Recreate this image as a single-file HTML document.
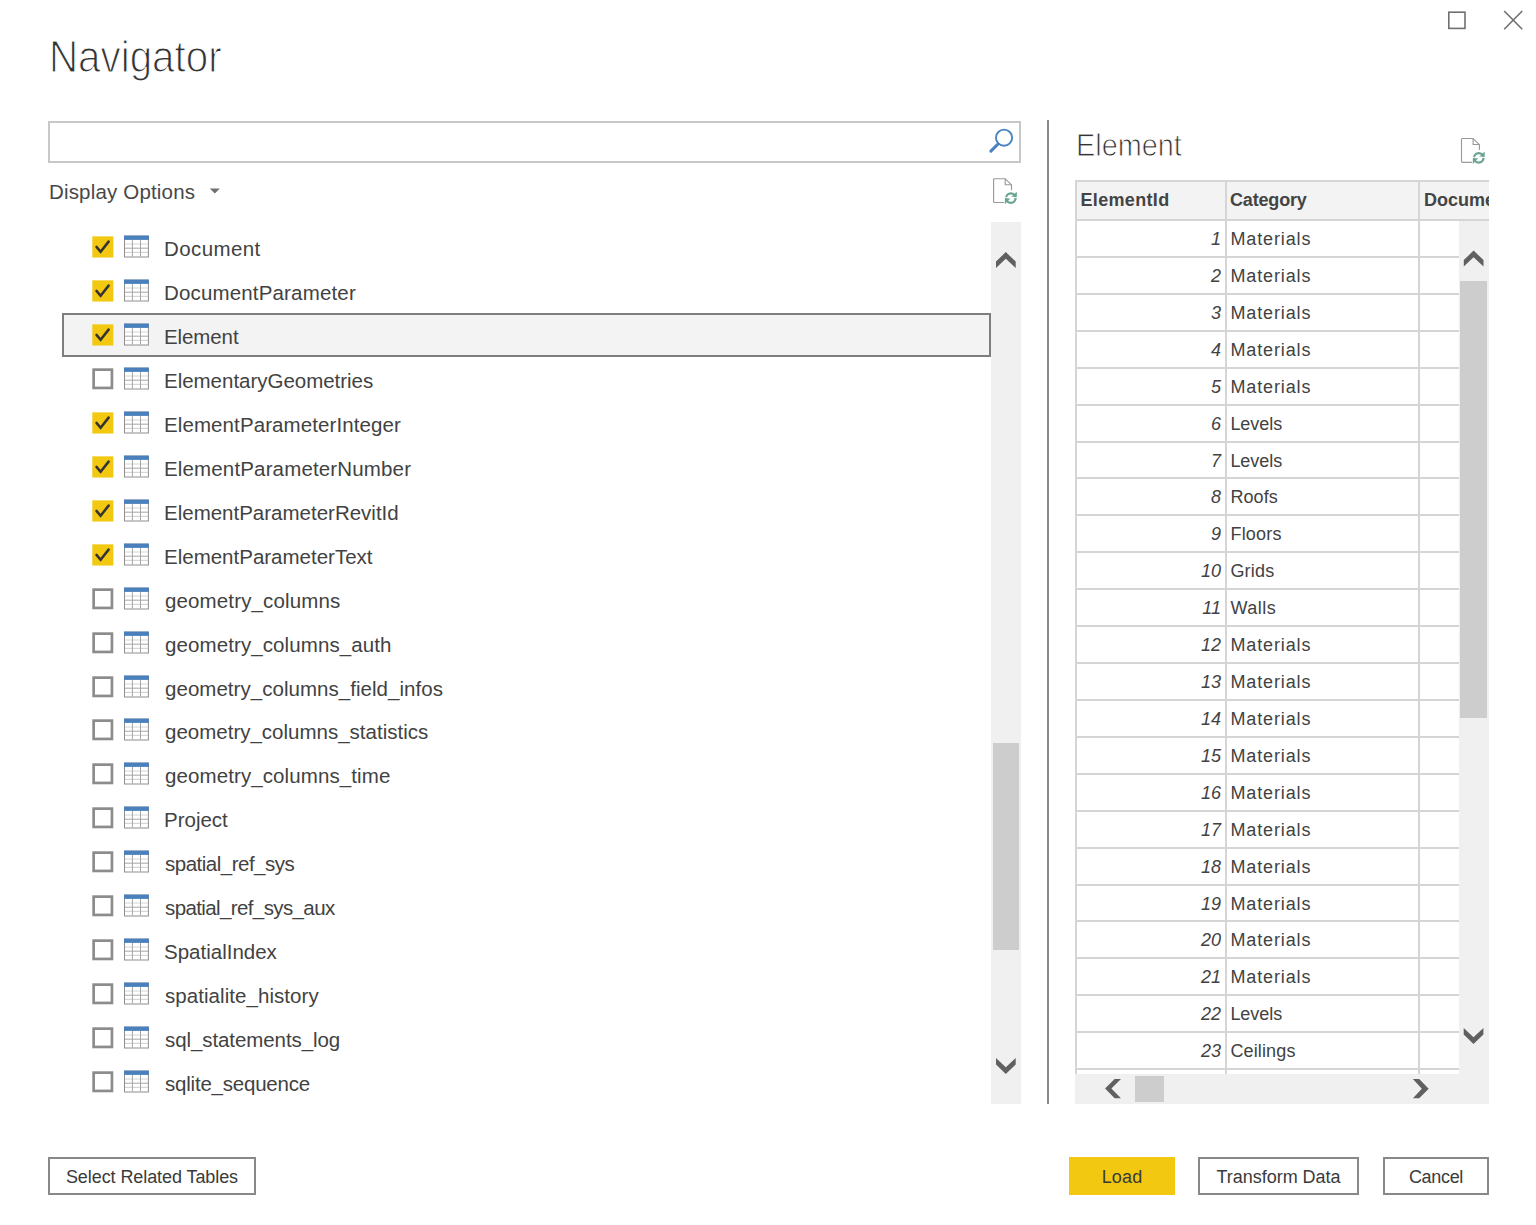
<!DOCTYPE html><html><head><meta charset="utf-8"><title>Navigator</title><style>
html,body{margin:0;padding:0;background:#fff;}
body{width:1536px;height:1225px;position:relative;overflow:hidden;font-family:"Liberation Sans",sans-serif;color:#3a3a3a;}
.abs{position:absolute;}
.overlay{position:absolute;left:0;top:0;pointer-events:none;}
.title{position:absolute;left:48.5px;top:33.5px;font-size:43.6px;line-height:46px;color:#333;-webkit-text-stroke:1.2px #fff;white-space:nowrap;transform:scaleX(0.925);transform-origin:0 0;}
.search{position:absolute;left:48px;top:121px;width:973px;height:42px;box-sizing:border-box;border:2px solid #c8c8c8;background:#fff;}
.dispopt{position:absolute;left:49px;top:180px;font-size:20.5px;line-height:24px;color:#484848;white-space:nowrap;}
.row{position:absolute;left:62px;width:929px;height:44px;box-sizing:border-box;white-space:nowrap;}
.selbox{position:absolute;left:62px;top:313px;width:929px;height:44px;box-sizing:border-box;background:#f3f3f3;border:2px solid #7e7e7e;}
.cb{position:absolute;left:30px;top:11px;}
.ticon{position:absolute;left:62px;top:10px;}
.nm{position:absolute;left:102px;top:12px;font-size:20.5px;line-height:24px;color:#424242;}
.vsb1{position:absolute;left:991px;top:222px;width:30px;height:881.5px;background:#f0f0f0;}
.thumb1{position:absolute;left:2px;top:521px;width:26px;height:206.5px;background:#cdcdcd;}
.divider{position:absolute;left:1047px;top:120px;width:2px;height:983.5px;background:#8a8a8a;}
.ptitle{position:absolute;left:1075.5px;top:127px;font-size:32px;line-height:36px;color:#333;-webkit-text-stroke:0.9px #fff;white-space:nowrap;transform:scaleX(0.901);transform-origin:0 0;}
.grid{position:absolute;left:1075px;top:180px;width:414px;height:894px;overflow:hidden;font-size:18px;line-height:22px;color:#424242;white-space:nowrap;}
.hbg{position:absolute;left:0;top:0;width:414px;height:40px;background:#f3f3f3;}
.hl{position:absolute;left:0;width:414px;height:2px;background:#d5d5d5;}
.vl{position:absolute;top:0;width:2px;height:894px;background:#d5d5d5;}
.ht{position:absolute;top:9px;font-weight:bold;color:#444;}
.c1{position:absolute;left:0;width:146px;text-align:right;font-style:italic;}
.c2{position:absolute;left:155.4px;}
.vsb2{position:absolute;left:1459px;top:221px;width:30px;height:882.5px;background:#f0f0f0;}
.thumb2{position:absolute;left:1.4px;top:60px;width:26.6px;height:437px;background:#cdcdcd;}
.hsb{position:absolute;left:1075px;top:1074px;width:414px;height:29.5px;background:#f0f0f0;}
.thumb3{position:absolute;left:60px;top:2px;width:29px;height:26px;background:#cdcdcd;}
.btn{position:absolute;top:1157px;height:38px;box-sizing:border-box;border:2px solid #898989;background:#fff;font-size:18px;line-height:22px;color:#3a3a3a;text-align:center;white-space:nowrap;}
.btn span{display:inline-block;margin-top:7px;}
.btn.load{background:#f2c811;border-color:#f2c811;}

</style></head><body>
<div class="title" style="letter-spacing:0.000px;">Navigator</div>
<div class="search"></div>
<div class="dispopt" style="letter-spacing:0.171px;">Display Options</div>
<div class="selbox"></div>
<div class="row" style="top:225px"><svg class="cb" width="22" height="23" viewBox="0 0 22 23"><rect x="0.3" y="0.35" width="21.05" height="21.2" fill="#f2c811"/><path d="M4.5 10.9 L8.6 15.7 L16.6 5.6" fill="none" stroke="#333" stroke-width="2.5" stroke-linecap="round" stroke-linejoin="miter"/></svg><svg class="ticon" width="26" height="24" viewBox="0 -0.5 26 24"><rect x="0.5" y="0.6" width="23.9" height="20.9" fill="#fff" stroke="#8e8e8e" stroke-width="1"/><path d="M1 8.5 H24 M1 16.9 H24" stroke="#d6d6d6" stroke-width="1.1" fill="none"/><path d="M1 12.7 H24 M8.4 4 V21 M16.5 4 V21" stroke="#a6a6a6" stroke-width="1" fill="none"/><rect x="0" y="0.1" width="24.9" height="4.3" fill="#4a80bc"/></svg><span class="nm" style="letter-spacing:0.399px;">Document</span></div>
<div class="row" style="top:269px"><svg class="cb" width="22" height="23" viewBox="0 0 22 23"><rect x="0.3" y="0.35" width="21.05" height="21.2" fill="#f2c811"/><path d="M4.5 10.9 L8.6 15.7 L16.6 5.6" fill="none" stroke="#333" stroke-width="2.5" stroke-linecap="round" stroke-linejoin="miter"/></svg><svg class="ticon" width="26" height="24" viewBox="0 -0.5 26 24"><rect x="0.5" y="0.6" width="23.9" height="20.9" fill="#fff" stroke="#8e8e8e" stroke-width="1"/><path d="M1 8.5 H24 M1 16.9 H24" stroke="#d6d6d6" stroke-width="1.1" fill="none"/><path d="M1 12.7 H24 M8.4 4 V21 M16.5 4 V21" stroke="#a6a6a6" stroke-width="1" fill="none"/><rect x="0" y="0.1" width="24.9" height="4.3" fill="#4a80bc"/></svg><span class="nm" style="letter-spacing:0.161px;">DocumentParameter</span></div>
<div class="row" style="top:313px"><svg class="cb" width="22" height="23" viewBox="0 0 22 23"><rect x="0.3" y="0.35" width="21.05" height="21.2" fill="#f2c811"/><path d="M4.5 10.9 L8.6 15.7 L16.6 5.6" fill="none" stroke="#333" stroke-width="2.5" stroke-linecap="round" stroke-linejoin="miter"/></svg><svg class="ticon" width="26" height="24" viewBox="0 -0.5 26 24"><rect x="0.5" y="0.6" width="23.9" height="20.9" fill="#fff" stroke="#8e8e8e" stroke-width="1"/><path d="M1 8.5 H24 M1 16.9 H24" stroke="#d6d6d6" stroke-width="1.1" fill="none"/><path d="M1 12.7 H24 M8.4 4 V21 M16.5 4 V21" stroke="#a6a6a6" stroke-width="1" fill="none"/><rect x="0" y="0.1" width="24.9" height="4.3" fill="#4a80bc"/></svg><span class="nm" style="letter-spacing:-0.100px;">Element</span></div>
<div class="row" style="top:357px"><svg class="cb" width="22" height="22" viewBox="0 0 22 22"><rect x="1.65" y="1.65" width="18.3" height="18.3" fill="#fff" stroke="#8c8c8c" stroke-width="2.7"/></svg><svg class="ticon" width="26" height="24" viewBox="0 -0.5 26 24"><rect x="0.5" y="0.6" width="23.9" height="20.9" fill="#fff" stroke="#8e8e8e" stroke-width="1"/><path d="M1 8.5 H24 M1 16.9 H24" stroke="#d6d6d6" stroke-width="1.1" fill="none"/><path d="M1 12.7 H24 M8.4 4 V21 M16.5 4 V21" stroke="#a6a6a6" stroke-width="1" fill="none"/><rect x="0" y="0.1" width="24.9" height="4.3" fill="#4a80bc"/></svg><span class="nm" style="letter-spacing:-0.022px;">ElementaryGeometries</span></div>
<div class="row" style="top:401px"><svg class="cb" width="22" height="23" viewBox="0 0 22 23"><rect x="0.3" y="0.35" width="21.05" height="21.2" fill="#f2c811"/><path d="M4.5 10.9 L8.6 15.7 L16.6 5.6" fill="none" stroke="#333" stroke-width="2.5" stroke-linecap="round" stroke-linejoin="miter"/></svg><svg class="ticon" width="26" height="24" viewBox="0 -0.5 26 24"><rect x="0.5" y="0.6" width="23.9" height="20.9" fill="#fff" stroke="#8e8e8e" stroke-width="1"/><path d="M1 8.5 H24 M1 16.9 H24" stroke="#d6d6d6" stroke-width="1.1" fill="none"/><path d="M1 12.7 H24 M8.4 4 V21 M16.5 4 V21" stroke="#a6a6a6" stroke-width="1" fill="none"/><rect x="0" y="0.1" width="24.9" height="4.3" fill="#4a80bc"/></svg><span class="nm" style="letter-spacing:0.100px;">ElementParameterInteger</span></div>
<div class="row" style="top:445px"><svg class="cb" width="22" height="23" viewBox="0 0 22 23"><rect x="0.3" y="0.35" width="21.05" height="21.2" fill="#f2c811"/><path d="M4.5 10.9 L8.6 15.7 L16.6 5.6" fill="none" stroke="#333" stroke-width="2.5" stroke-linecap="round" stroke-linejoin="miter"/></svg><svg class="ticon" width="26" height="24" viewBox="0 -0.5 26 24"><rect x="0.5" y="0.6" width="23.9" height="20.9" fill="#fff" stroke="#8e8e8e" stroke-width="1"/><path d="M1 8.5 H24 M1 16.9 H24" stroke="#d6d6d6" stroke-width="1.1" fill="none"/><path d="M1 12.7 H24 M8.4 4 V21 M16.5 4 V21" stroke="#a6a6a6" stroke-width="1" fill="none"/><rect x="0" y="0.1" width="24.9" height="4.3" fill="#4a80bc"/></svg><span class="nm" style="letter-spacing:0.151px;">ElementParameterNumber</span></div>
<div class="row" style="top:489px"><svg class="cb" width="22" height="23" viewBox="0 0 22 23"><rect x="0.3" y="0.35" width="21.05" height="21.2" fill="#f2c811"/><path d="M4.5 10.9 L8.6 15.7 L16.6 5.6" fill="none" stroke="#333" stroke-width="2.5" stroke-linecap="round" stroke-linejoin="miter"/></svg><svg class="ticon" width="26" height="24" viewBox="0 -0.5 26 24"><rect x="0.5" y="0.6" width="23.9" height="20.9" fill="#fff" stroke="#8e8e8e" stroke-width="1"/><path d="M1 8.5 H24 M1 16.9 H24" stroke="#d6d6d6" stroke-width="1.1" fill="none"/><path d="M1 12.7 H24 M8.4 4 V21 M16.5 4 V21" stroke="#a6a6a6" stroke-width="1" fill="none"/><rect x="0" y="0.1" width="24.9" height="4.3" fill="#4a80bc"/></svg><span class="nm" style="letter-spacing:-0.001px;">ElementParameterRevitId</span></div>
<div class="row" style="top:533px"><svg class="cb" width="22" height="23" viewBox="0 0 22 23"><rect x="0.3" y="0.35" width="21.05" height="21.2" fill="#f2c811"/><path d="M4.5 10.9 L8.6 15.7 L16.6 5.6" fill="none" stroke="#333" stroke-width="2.5" stroke-linecap="round" stroke-linejoin="miter"/></svg><svg class="ticon" width="26" height="24" viewBox="0 -0.5 26 24"><rect x="0.5" y="0.6" width="23.9" height="20.9" fill="#fff" stroke="#8e8e8e" stroke-width="1"/><path d="M1 8.5 H24 M1 16.9 H24" stroke="#d6d6d6" stroke-width="1.1" fill="none"/><path d="M1 12.7 H24 M8.4 4 V21 M16.5 4 V21" stroke="#a6a6a6" stroke-width="1" fill="none"/><rect x="0" y="0.1" width="24.9" height="4.3" fill="#4a80bc"/></svg><span class="nm" style="letter-spacing:-0.000px;">ElementParameterText</span></div>
<div class="row" style="top:577px"><svg class="cb" width="22" height="22" viewBox="0 0 22 22"><rect x="1.65" y="1.65" width="18.3" height="18.3" fill="#fff" stroke="#8c8c8c" stroke-width="2.7"/></svg><svg class="ticon" width="26" height="24" viewBox="0 -0.5 26 24"><rect x="0.5" y="0.6" width="23.9" height="20.9" fill="#fff" stroke="#8e8e8e" stroke-width="1"/><path d="M1 8.5 H24 M1 16.9 H24" stroke="#d6d6d6" stroke-width="1.1" fill="none"/><path d="M1 12.7 H24 M8.4 4 V21 M16.5 4 V21" stroke="#a6a6a6" stroke-width="1" fill="none"/><rect x="0" y="0.1" width="24.9" height="4.3" fill="#4a80bc"/></svg><span class="nm" style="letter-spacing:0.134px;left:103px;">geometry_columns</span></div>
<div class="row" style="top:621px"><svg class="cb" width="22" height="22" viewBox="0 0 22 22"><rect x="1.65" y="1.65" width="18.3" height="18.3" fill="#fff" stroke="#8c8c8c" stroke-width="2.7"/></svg><svg class="ticon" width="26" height="24" viewBox="0 -0.5 26 24"><rect x="0.5" y="0.6" width="23.9" height="20.9" fill="#fff" stroke="#8e8e8e" stroke-width="1"/><path d="M1 8.5 H24 M1 16.9 H24" stroke="#d6d6d6" stroke-width="1.1" fill="none"/><path d="M1 12.7 H24 M8.4 4 V21 M16.5 4 V21" stroke="#a6a6a6" stroke-width="1" fill="none"/><rect x="0" y="0.1" width="24.9" height="4.3" fill="#4a80bc"/></svg><span class="nm" style="letter-spacing:0.100px;left:103px;">geometry_columns_auth</span></div>
<div class="row" style="top:665px"><svg class="cb" width="22" height="22" viewBox="0 0 22 22"><rect x="1.65" y="1.65" width="18.3" height="18.3" fill="#fff" stroke="#8c8c8c" stroke-width="2.7"/></svg><svg class="ticon" width="26" height="24" viewBox="0 -0.5 26 24"><rect x="0.5" y="0.6" width="23.9" height="20.9" fill="#fff" stroke="#8e8e8e" stroke-width="1"/><path d="M1 8.5 H24 M1 16.9 H24" stroke="#d6d6d6" stroke-width="1.1" fill="none"/><path d="M1 12.7 H24 M8.4 4 V21 M16.5 4 V21" stroke="#a6a6a6" stroke-width="1" fill="none"/><rect x="0" y="0.1" width="24.9" height="4.3" fill="#4a80bc"/></svg><span class="nm" style="letter-spacing:0.037px;left:103px;">geometry_columns_field_infos</span></div>
<div class="row" style="top:708px"><svg class="cb" width="22" height="22" viewBox="0 0 22 22"><rect x="1.65" y="1.65" width="18.3" height="18.3" fill="#fff" stroke="#8c8c8c" stroke-width="2.7"/></svg><svg class="ticon" width="26" height="24" viewBox="0 -0.5 26 24"><rect x="0.5" y="0.6" width="23.9" height="20.9" fill="#fff" stroke="#8e8e8e" stroke-width="1"/><path d="M1 8.5 H24 M1 16.9 H24" stroke="#d6d6d6" stroke-width="1.1" fill="none"/><path d="M1 12.7 H24 M8.4 4 V21 M16.5 4 V21" stroke="#a6a6a6" stroke-width="1" fill="none"/><rect x="0" y="0.1" width="24.9" height="4.3" fill="#4a80bc"/></svg><span class="nm" style="letter-spacing:0.000px;left:103px;">geometry_columns_statistics</span></div>
<div class="row" style="top:752px"><svg class="cb" width="22" height="22" viewBox="0 0 22 22"><rect x="1.65" y="1.65" width="18.3" height="18.3" fill="#fff" stroke="#8c8c8c" stroke-width="2.7"/></svg><svg class="ticon" width="26" height="24" viewBox="0 -0.5 26 24"><rect x="0.5" y="0.6" width="23.9" height="20.9" fill="#fff" stroke="#8e8e8e" stroke-width="1"/><path d="M1 8.5 H24 M1 16.9 H24" stroke="#d6d6d6" stroke-width="1.1" fill="none"/><path d="M1 12.7 H24 M8.4 4 V21 M16.5 4 V21" stroke="#a6a6a6" stroke-width="1" fill="none"/><rect x="0" y="0.1" width="24.9" height="4.3" fill="#4a80bc"/></svg><span class="nm" style="letter-spacing:0.100px;left:103px;">geometry_columns_time</span></div>
<div class="row" style="top:796px"><svg class="cb" width="22" height="22" viewBox="0 0 22 22"><rect x="1.65" y="1.65" width="18.3" height="18.3" fill="#fff" stroke="#8c8c8c" stroke-width="2.7"/></svg><svg class="ticon" width="26" height="24" viewBox="0 -0.5 26 24"><rect x="0.5" y="0.6" width="23.9" height="20.9" fill="#fff" stroke="#8e8e8e" stroke-width="1"/><path d="M1 8.5 H24 M1 16.9 H24" stroke="#d6d6d6" stroke-width="1.1" fill="none"/><path d="M1 12.7 H24 M8.4 4 V21 M16.5 4 V21" stroke="#a6a6a6" stroke-width="1" fill="none"/><rect x="0" y="0.1" width="24.9" height="4.3" fill="#4a80bc"/></svg><span class="nm" style="letter-spacing:0.000px;">Project</span></div>
<div class="row" style="top:840px"><svg class="cb" width="22" height="22" viewBox="0 0 22 22"><rect x="1.65" y="1.65" width="18.3" height="18.3" fill="#fff" stroke="#8c8c8c" stroke-width="2.7"/></svg><svg class="ticon" width="26" height="24" viewBox="0 -0.5 26 24"><rect x="0.5" y="0.6" width="23.9" height="20.9" fill="#fff" stroke="#8e8e8e" stroke-width="1"/><path d="M1 8.5 H24 M1 16.9 H24" stroke="#d6d6d6" stroke-width="1.1" fill="none"/><path d="M1 12.7 H24 M8.4 4 V21 M16.5 4 V21" stroke="#a6a6a6" stroke-width="1" fill="none"/><rect x="0" y="0.1" width="24.9" height="4.3" fill="#4a80bc"/></svg><span class="nm" style="letter-spacing:-0.500px;left:103px;">spatial_ref_sys</span></div>
<div class="row" style="top:884px"><svg class="cb" width="22" height="22" viewBox="0 0 22 22"><rect x="1.65" y="1.65" width="18.3" height="18.3" fill="#fff" stroke="#8c8c8c" stroke-width="2.7"/></svg><svg class="ticon" width="26" height="24" viewBox="0 -0.5 26 24"><rect x="0.5" y="0.6" width="23.9" height="20.9" fill="#fff" stroke="#8e8e8e" stroke-width="1"/><path d="M1 8.5 H24 M1 16.9 H24" stroke="#d6d6d6" stroke-width="1.1" fill="none"/><path d="M1 12.7 H24 M8.4 4 V21 M16.5 4 V21" stroke="#a6a6a6" stroke-width="1" fill="none"/><rect x="0" y="0.1" width="24.9" height="4.3" fill="#4a80bc"/></svg><span class="nm" style="letter-spacing:-0.611px;left:103px;">spatial_ref_sys_aux</span></div>
<div class="row" style="top:928px"><svg class="cb" width="22" height="22" viewBox="0 0 22 22"><rect x="1.65" y="1.65" width="18.3" height="18.3" fill="#fff" stroke="#8c8c8c" stroke-width="2.7"/></svg><svg class="ticon" width="26" height="24" viewBox="0 -0.5 26 24"><rect x="0.5" y="0.6" width="23.9" height="20.9" fill="#fff" stroke="#8e8e8e" stroke-width="1"/><path d="M1 8.5 H24 M1 16.9 H24" stroke="#d6d6d6" stroke-width="1.1" fill="none"/><path d="M1 12.7 H24 M8.4 4 V21 M16.5 4 V21" stroke="#a6a6a6" stroke-width="1" fill="none"/><rect x="0" y="0.1" width="24.9" height="4.3" fill="#4a80bc"/></svg><span class="nm" style="letter-spacing:0.000px;">SpatialIndex</span></div>
<div class="row" style="top:972px"><svg class="cb" width="22" height="22" viewBox="0 0 22 22"><rect x="1.65" y="1.65" width="18.3" height="18.3" fill="#fff" stroke="#8c8c8c" stroke-width="2.7"/></svg><svg class="ticon" width="26" height="24" viewBox="0 -0.5 26 24"><rect x="0.5" y="0.6" width="23.9" height="20.9" fill="#fff" stroke="#8e8e8e" stroke-width="1"/><path d="M1 8.5 H24 M1 16.9 H24" stroke="#d6d6d6" stroke-width="1.1" fill="none"/><path d="M1 12.7 H24 M8.4 4 V21 M16.5 4 V21" stroke="#a6a6a6" stroke-width="1" fill="none"/><rect x="0" y="0.1" width="24.9" height="4.3" fill="#4a80bc"/></svg><span class="nm" style="letter-spacing:0.058px;left:103px;">spatialite_history</span></div>
<div class="row" style="top:1016px"><svg class="cb" width="22" height="22" viewBox="0 0 22 22"><rect x="1.65" y="1.65" width="18.3" height="18.3" fill="#fff" stroke="#8c8c8c" stroke-width="2.7"/></svg><svg class="ticon" width="26" height="24" viewBox="0 -0.5 26 24"><rect x="0.5" y="0.6" width="23.9" height="20.9" fill="#fff" stroke="#8e8e8e" stroke-width="1"/><path d="M1 8.5 H24 M1 16.9 H24" stroke="#d6d6d6" stroke-width="1.1" fill="none"/><path d="M1 12.7 H24 M8.4 4 V21 M16.5 4 V21" stroke="#a6a6a6" stroke-width="1" fill="none"/><rect x="0" y="0.1" width="24.9" height="4.3" fill="#4a80bc"/></svg><span class="nm" style="letter-spacing:-0.083px;left:103px;">sql_statements_log</span></div>
<div class="row" style="top:1060px"><svg class="cb" width="22" height="22" viewBox="0 0 22 22"><rect x="1.65" y="1.65" width="18.3" height="18.3" fill="#fff" stroke="#8c8c8c" stroke-width="2.7"/></svg><svg class="ticon" width="26" height="24" viewBox="0 -0.5 26 24"><rect x="0.5" y="0.6" width="23.9" height="20.9" fill="#fff" stroke="#8e8e8e" stroke-width="1"/><path d="M1 8.5 H24 M1 16.9 H24" stroke="#d6d6d6" stroke-width="1.1" fill="none"/><path d="M1 12.7 H24 M8.4 4 V21 M16.5 4 V21" stroke="#a6a6a6" stroke-width="1" fill="none"/><rect x="0" y="0.1" width="24.9" height="4.3" fill="#4a80bc"/></svg><span class="nm" style="letter-spacing:-0.214px;left:103px;">sqlite_sequence</span></div>
<div class="vsb1"><div class="thumb1"></div></div>
<div class="divider"></div>
<div class="ptitle" style="letter-spacing:0.000px;">Element</div>
<div class="grid">
<div class="hbg"></div>
<div class="hl" style="top:0px"></div>
<div class="hl" style="top:39px"></div>
<div class="hl" style="top:76px"></div>
<div class="hl" style="top:113px"></div>
<div class="hl" style="top:150px"></div>
<div class="hl" style="top:187px"></div>
<div class="hl" style="top:224px"></div>
<div class="hl" style="top:261px"></div>
<div class="hl" style="top:297px"></div>
<div class="hl" style="top:334px"></div>
<div class="hl" style="top:371px"></div>
<div class="hl" style="top:408px"></div>
<div class="hl" style="top:445px"></div>
<div class="hl" style="top:482px"></div>
<div class="hl" style="top:519px"></div>
<div class="hl" style="top:556px"></div>
<div class="hl" style="top:593px"></div>
<div class="hl" style="top:630px"></div>
<div class="hl" style="top:667px"></div>
<div class="hl" style="top:704px"></div>
<div class="hl" style="top:740px"></div>
<div class="hl" style="top:777px"></div>
<div class="hl" style="top:814px"></div>
<div class="hl" style="top:851px"></div>
<div class="hl" style="top:888px"></div>
<div class="vl" style="left:0px"></div>
<div class="vl" style="left:150px"></div>
<div class="vl" style="left:343px"></div>
<div class="ht" style="left:5.5px;letter-spacing:0.327px;">ElementId</div><div class="ht" style="left:155px;letter-spacing:-0.170px;">Category</div><div class="ht" style="left:349px;">Document</div>
<div class="c1" style="top:48px">1</div><div class="c2" style="top:48px;letter-spacing:0.875px;">Materials</div>
<div class="c1" style="top:85px">2</div><div class="c2" style="top:85px;letter-spacing:0.875px;">Materials</div>
<div class="c1" style="top:122px">3</div><div class="c2" style="top:122px;letter-spacing:0.875px;">Materials</div>
<div class="c1" style="top:159px">4</div><div class="c2" style="top:159px;letter-spacing:0.875px;">Materials</div>
<div class="c1" style="top:196px">5</div><div class="c2" style="top:196px;letter-spacing:0.875px;">Materials</div>
<div class="c1" style="top:233px">6</div><div class="c2" style="top:233px;letter-spacing:-0.040px;">Levels</div>
<div class="c1" style="top:270px">7</div><div class="c2" style="top:270px;letter-spacing:-0.040px;">Levels</div>
<div class="c1" style="top:306px">8</div><div class="c2" style="top:306px;letter-spacing:0.100px;">Roofs</div>
<div class="c1" style="top:343px">9</div><div class="c2" style="top:343px;letter-spacing:0.240px;">Floors</div>
<div class="c1" style="top:380px">10</div><div class="c2" style="top:380px;letter-spacing:0.200px;">Grids</div>
<div class="c1" style="top:417px">11</div><div class="c2" style="top:417px;letter-spacing:0.500px;">Walls</div>
<div class="c1" style="top:454px">12</div><div class="c2" style="top:454px;letter-spacing:0.875px;">Materials</div>
<div class="c1" style="top:491px">13</div><div class="c2" style="top:491px;letter-spacing:0.875px;">Materials</div>
<div class="c1" style="top:528px">14</div><div class="c2" style="top:528px;letter-spacing:0.875px;">Materials</div>
<div class="c1" style="top:565px">15</div><div class="c2" style="top:565px;letter-spacing:0.875px;">Materials</div>
<div class="c1" style="top:602px">16</div><div class="c2" style="top:602px;letter-spacing:0.875px;">Materials</div>
<div class="c1" style="top:639px">17</div><div class="c2" style="top:639px;letter-spacing:0.875px;">Materials</div>
<div class="c1" style="top:676px">18</div><div class="c2" style="top:676px;letter-spacing:0.875px;">Materials</div>
<div class="c1" style="top:713px">19</div><div class="c2" style="top:713px;letter-spacing:0.875px;">Materials</div>
<div class="c1" style="top:749px">20</div><div class="c2" style="top:749px;letter-spacing:0.875px;">Materials</div>
<div class="c1" style="top:786px">21</div><div class="c2" style="top:786px;letter-spacing:0.875px;">Materials</div>
<div class="c1" style="top:823px">22</div><div class="c2" style="top:823px;letter-spacing:-0.040px;">Levels</div>
<div class="c1" style="top:860px">23</div><div class="c2" style="top:860px;letter-spacing:0.142px;">Ceilings</div>
</div>
<div class="vsb2"><div class="thumb2"></div></div>
<div class="hsb"><div class="thumb3"></div></div>
<div class="btn" style="left:48px;width:208px"><span style="letter-spacing:-0.080px;">Select Related Tables</span></div>
<div class="btn load" style="left:1069px;width:106px"><span style="letter-spacing:0.132px;">Load</span></div>
<div class="btn" style="left:1198px;width:161px"><span style="letter-spacing:-0.017px;">Transform Data</span></div>
<div class="btn" style="left:1383px;width:106px"><span style="letter-spacing:-0.320px;">Cancel</span></div>
<svg class="overlay" width="1536" height="1225" viewBox="0 0 1536 1225"><rect x="1448.8" y="12.2" width="16.2" height="16.2" fill="none" stroke="#707070" stroke-width="1.6"/><path d="M1504.2 11 L1522.2 29.2 M1522.2 11 L1504.2 29.2" stroke="#707070" stroke-width="1.6" fill="none"/><circle cx="1004.05" cy="137.7" r="8.1" fill="none" stroke="#4a83c0" stroke-width="1.9"/><path d="M998.0 144.0 L990.9 151.1" stroke="#4a83c0" stroke-width="3.1" stroke-linecap="round"/><path d="M209.8 188.4 L219.8 188.4 L214.8 193.6 Z" fill="#707070"/><g transform="translate(992.1,177.2)"><path d="M19.4 13 V7.7 L13.1 1.5 H2.5 Q1.5 1.5 1.5 2.5 V24.3 Q1.5 25.3 2.5 25.3 H11.9" fill="none" stroke="#9a9a9a" stroke-width="1.15"/><path d="M13.1 1.5 V7.5 H19.4" fill="none" stroke="#9a9a9a" stroke-width="1.15"/><circle cx="18.75" cy="20.85" r="4.75" fill="none" stroke="#69a58f" stroke-width="2.3"/><rect x="12" y="19.95" width="13.6" height="0.9" fill="#fff"/><path d="M24.7 14.5 V19.55 H19.3 Z" fill="#69a58f"/><path d="M12.8 27.1 V21.25 H18.2 Z" fill="#69a58f"/></g><g transform="translate(1460,137)"><path d="M19.4 13 V7.7 L13.1 1.5 H2.5 Q1.5 1.5 1.5 2.5 V24.3 Q1.5 25.3 2.5 25.3 H11.9" fill="none" stroke="#9a9a9a" stroke-width="1.15"/><path d="M13.1 1.5 V7.5 H19.4" fill="none" stroke="#9a9a9a" stroke-width="1.15"/><circle cx="18.75" cy="20.85" r="4.75" fill="none" stroke="#69a58f" stroke-width="2.3"/><rect x="12" y="19.95" width="13.6" height="0.9" fill="#fff"/><path d="M24.7 14.5 V19.55 H19.3 Z" fill="#69a58f"/><path d="M12.8 27.1 V21.25 H18.2 Z" fill="#69a58f"/></g><polygon points="996.0,261.6 1005.8,252.1 1015.7,261.6 1015.7,268.1 1005.8,258.7 996.0,268.1" fill="#606060"/><polygon points="996.0,1064.4 1005.8,1073.9 1015.7,1064.4 1015.7,1057.9 1005.8,1067.3 996.0,1057.9" fill="#606060"/><polygon points="1463.8,260.1 1473.6,250.6 1483.5,260.1 1483.5,266.6 1473.6,257.2 1463.8,266.6" fill="#606060"/><polygon points="1463.7,1034.4 1473.5,1043.9 1483.4,1034.4 1483.4,1027.9 1473.5,1037.3 1463.7,1027.9" fill="#606060"/><polygon points="1114.6,1078.9 1105.1,1088.6 1114.6,1098.2 1121.0,1098.2 1111.4,1088.6 1121.0,1078.9" fill="#606060"/><polygon points="1419.2,1079.0 1428.7,1088.7 1419.2,1098.3 1412.9,1098.3 1421.8,1088.7 1412.9,1079.0" fill="#606060"/></svg>
</body></html>
